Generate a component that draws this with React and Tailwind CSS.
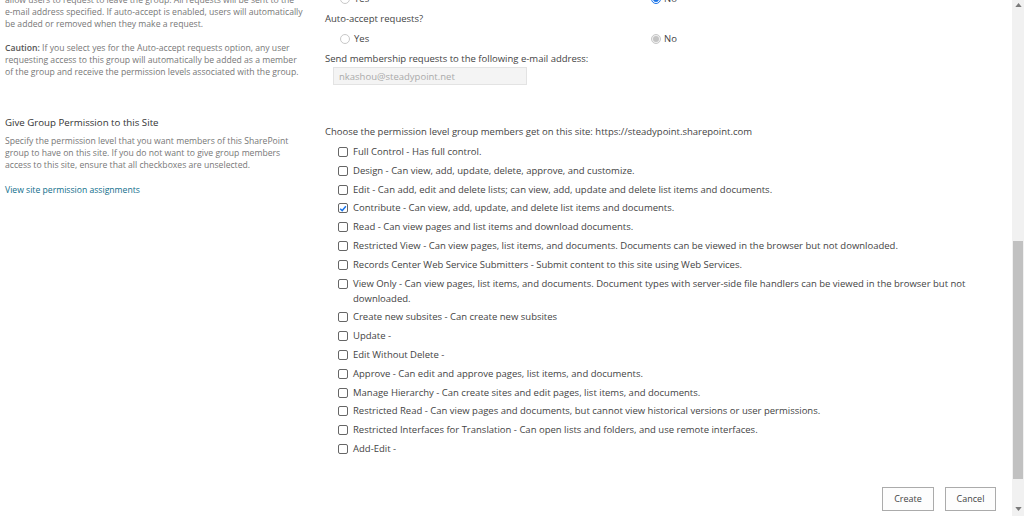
import React from 'react';

const permissions = [
  { label: 'Full Control - Has full control.' },
  { label: 'Design - Can view, add, update, delete, approve, and customize.' },
  { label: 'Edit - Can add, edit and delete lists; can view, add, update and delete list items and documents.' },
  { label: 'Contribute - Can view, add, update, and delete list items and documents.', checked: true },
  { label: 'Read - Can view pages and list items and download documents.' },
  { label: 'Restricted View - Can view pages, list items, and documents. Documents can be viewed in the browser but not downloaded.' },
  { label: 'Records Center Web Service Submitters - Submit content to this site using Web Services.' },
  { label: 'View Only - Can view pages, list items, and documents. Document types with server-side file handlers can be viewed in the browser but not downloaded.' },
  { label: 'Create new subsites - Can create new subsites' },
  { label: 'Update -' },
  { label: 'Edit Without Delete -' },
  { label: 'Approve - Can edit and approve pages, list items, and documents.' },
  { label: 'Manage Hierarchy - Can create sites and edit pages, list items, and documents.' },
  { label: 'Restricted Read - Can view pages and documents, but cannot view historical versions or user permissions.' },
  { label: 'Restricted Interfaces for Translation - Can open lists and folders, and use remote interfaces.' },
  { label: 'Add-Edit -' },
];

const Radio = ({ state }) => {
  if (state === 'blue') {
    return (
      <span className="w-[10px] h-[10px] rounded-full border border-[#1a73e8] bg-white flex items-center justify-center shrink-0">
        <span className="w-[6px] h-[6px] rounded-full bg-[#1a73e8]" />
      </span>
    );
  }
  if (state === 'disabled') {
    return (
      <span className="w-[10px] h-[10px] rounded-full border border-[#c8c8c8] bg-[#f0f0f0] flex items-center justify-center shrink-0">
        <span className="w-[6px] h-[6px] rounded-full bg-[#c4c4c4]" />
      </span>
    );
  }
  return <span className="w-[10px] h-[10px] rounded-full border border-[#c8c8c8] bg-white shrink-0" />;
};

const Checkbox = ({ checked }) => (
  <span className="w-[10px] h-[10px] mt-[3px] border border-[#666] rounded-[2px] bg-white flex items-center justify-center shrink-0">
    {checked && (
      <svg viewBox="0 0 10 10" className="w-[9px] h-[9px]">
        <path d="M1.5 5.2 L4 7.6 L8.6 2.2" fill="none" stroke="#1a73e8" strokeWidth="1.8" />
      </svg>
    )}
  </span>
);

const RadioRow = ({ left, right }) => (
  <div className="flex h-[15px] items-center">
    <div className="w-[326px] pl-[15px] flex items-center gap-[4px]">
      <Radio state={left} />
      <span>Yes</span>
    </div>
    <div className="flex items-center gap-[3px]">
      <Radio state={right} />
      <span>No</span>
    </div>
  </div>
);

export default function App() {
  return (
    <div className="h-[516px] w-[1024px] overflow-hidden flex bg-white text-[#444] font-['Open_Sans',sans-serif] text-[9.5px]">
      <div className="flex-1 flex flex-col">
        <div className="flex -mt-[9px]">
          {/* Left descriptions */}
          <div className="w-[320px] pt-[3px] pl-[5px] pr-[8px] shrink-0 text-[8.65px] leading-[12px] text-[#777]">
            <p>allow users to request to leave the group. All requests will be sent to the</p>
            <p>e-mail address specified. If auto-accept is enabled, users will automatically</p>
            <p>be added or removed when they make a request.</p>
            <p className="mt-[12px]">
              <span className="font-semibold text-[#555]">Caution:</span> If you select yes for the Auto-accept requests option, any user
            </p>
            <p>requesting access to this group will automatically be added as a member</p>
            <p>of the group and receive the permission levels associated with the group.</p>
            <h3 className="mt-[38px] text-[9.7px] leading-[14px] text-[#333]">Give Group Permission to this Site</h3>
            <p className="mt-[5px]">Specify the permission level that you want members of this SharePoint</p>
            <p>group to have on this site. If you do not want to give group members</p>
            <p>access to this site, ensure that all checkboxes are unselected.</p>
            <p className="mt-[13px] text-[#0f6e8c]">View site permission assignments</p>
          </div>

          {/* Right form */}
          <div className="flex-1 pl-[5px] pr-[16px] leading-[15px]">
            <RadioRow left="empty" right="blue" />
            <div className="mt-[5px] h-[15px]">Auto-accept requests?</div>
            <div className="mt-[5px]">
              <RadioRow left="empty" right="disabled" />
            </div>
            <div className="mt-[5px] h-[15px]">Send membership requests to the following e-mail address:</div>
            <div className="mt-[1px] ml-[8px] w-[194px] h-[18px] border border-[#e3e3e3] bg-[#f4f4f4] px-[5px] flex items-center text-[#aaa]">
              nkashou@steadypoint.net
            </div>
            <div className="mt-[39px] h-[15px]">Choose the permission level group members get on this site: https://steadypoint.sharepoint.com</div>
            <div className="mt-[5px] pl-[13px] flex flex-col gap-[3.8px]">
              {permissions.map((p) => (
                <div key={p.label} className="flex gap-[5px] items-start">
                  <Checkbox checked={p.checked} />
                  <span className="max-w-[630px]">{p.label}</span>
                </div>
              ))}
            </div>
          </div>
        </div>
        <div className="mt-[31px] flex justify-end gap-[11px] pr-[16px] text-[9px] text-[#444]">
          <button className="w-[52px] h-[24px] border border-[#ababab] bg-[#fdfdfd]">Create</button>
          <button className="w-[51px] h-[24px] border border-[#ababab] bg-[#fdfdfd]">Cancel</button>
        </div>
      </div>

      {/* Scrollbar */}
      <div className="w-[12px] bg-[#f1f1f1] flex flex-col items-center">
        <svg viewBox="0 0 8 5" className="w-[7px] h-[4px] mt-[3px]">
          <path d="M0 5 L4 0 L8 5 Z" fill="#7a7a7a" />
        </svg>
        <div className="mt-[234px] w-[10px] h-[238px] bg-[#c1c1c1]" />
        <div className="flex-1" />
        <svg viewBox="0 0 8 5" className="w-[7px] h-[4px] mb-[5px]">
          <path d="M0 0 L8 0 L4 5 Z" fill="#7a7a7a" />
        </svg>
      </div>
    </div>
  );
}
